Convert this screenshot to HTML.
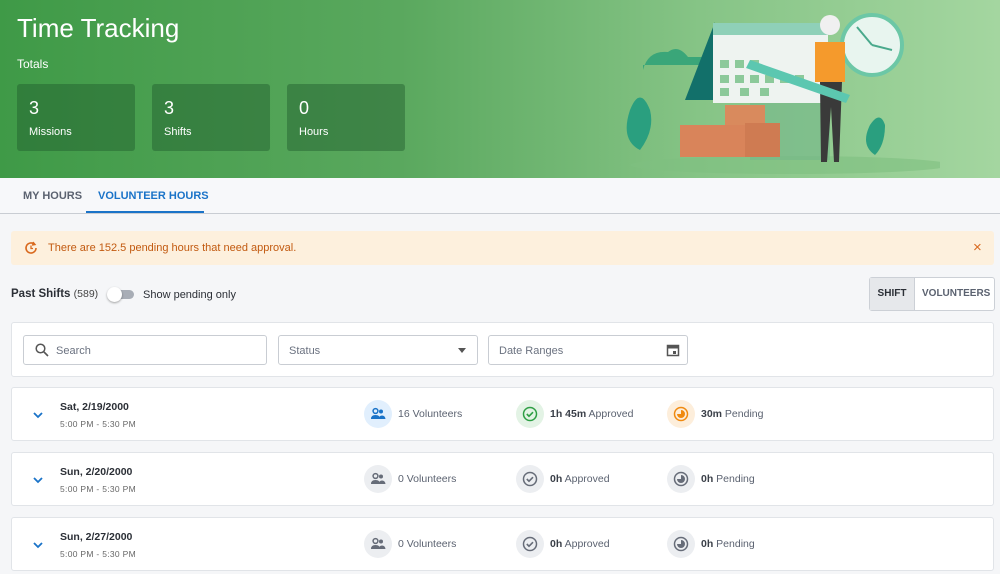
<!DOCTYPE html>
<html><head><meta charset="utf-8"><style>
*{box-sizing:border-box;margin:0;padding:0}
body{width:1000px;height:574px;overflow:hidden;background:#f5f6f8;font-family:"Liberation Sans",sans-serif;color:#2b2f36;position:relative}
.hdr{position:absolute;left:0;top:0;width:1000px;height:178px;background:linear-gradient(90deg,#3f9a47 0%,#5aa85e 40%,#86c486 70%,#a4d6a0 100%)}
.hdr h1{position:absolute;left:17px;top:13px;font-size:26px;font-weight:400;color:#fff}
.tot{position:absolute;left:17px;top:57px;font-size:12px;color:#fff}
.card{position:absolute;top:84px;width:118px;height:67px;background:rgba(30,90,45,.45);border-radius:3px;color:#fff}
.card b{position:absolute;left:12px;top:14px;font-size:18px;font-weight:400}
.card span{position:absolute;left:12px;top:42px;font-size:11px}
.tabs{position:absolute;top:178px;left:0;width:1000px;height:36px;background:#f7f8fa;border-bottom:1px solid #c9cdd3}
.tab{position:absolute;top:12px;font-size:11px;font-weight:700;color:#5b6270}
.tab.a{color:#1a73c8}
.ul{position:absolute;left:86px;top:33px;width:118px;height:2px;background:#1a73c8}
.alert{position:absolute;left:11px;top:231px;width:983px;height:34px;background:#fdf0dd;border-radius:3px}
.alert span{position:absolute;left:37px;top:11px;font-size:11px;color:#c25a10}
.ps{position:absolute;left:11px;top:288px;font-size:11.5px;font-weight:700}
.ps small{font-weight:400;font-size:10.5px;color:#444}
.tg{position:absolute;left:109px;top:290px;width:25px;height:9px;background:#a8adb6;border-radius:5px}
.tg i{position:absolute;left:-2px;top:-3px;width:15px;height:15px;border-radius:50%;background:#fff;box-shadow:0 1px 2px rgba(0,0,0,.35)}
.spo{position:absolute;left:143px;top:289px;font-size:11px}
.seg{position:absolute;left:869px;top:277px;width:126px;height:34px;border:1px solid #ccd0d6;border-radius:3px;background:#fff;font-size:10px;font-weight:700}
.seg .s1{position:absolute;left:0;top:0;width:45px;height:32px;background:#e6e8eb;border-right:1px solid #ccd0d6;text-align:center;line-height:32px}
.seg .s2{position:absolute;left:52px;top:0;line-height:32px;color:#5b6270}
.fil{position:absolute;left:11px;top:322px;width:983px;height:55px;background:#fff;border:1px solid #e1e4e8;border-radius:3px}
.in{position:absolute;top:12px;height:30px;border:1px solid #c9cdd3;border-radius:3px;font-size:11px;color:#6b7280;padding:9px 0 0 10px}
.row{position:absolute;left:11px;width:983px;height:54px;background:#fff;border:1px solid #e1e4e8;border-radius:3px}
.row .d{position:absolute;left:48px;top:13px;font-size:10.5px;font-weight:700}
.row .t{position:absolute;left:48px;top:31px;font-size:8.5px;color:#666;letter-spacing:.3px}
.row .ch{position:absolute;left:20px;top:23px}
.ic{position:absolute;top:12px;width:28px;height:28px;border-radius:50%;background:#eceef1}
.ic svg{position:absolute;left:6px;top:6px}
.lb{position:absolute;top:20px;font-size:10.5px;color:#5b6270}
.lb b{color:#3a3f48}
</style></head><body>
<div class="hdr">
<h1>Time Tracking</h1><div class="tot">Totals</div>
<div class="card" style="left:17px"><b>3</b><span>Missions</span></div>
<div class="card" style="left:152px"><b>3</b><span>Shifts</span></div>
<div class="card" style="left:287px"><b>0</b><span>Hours</span></div>
<svg style="position:absolute;left:600px;top:0" width="340" height="178">
<ellipse cx="190" cy="165" rx="160" ry="9" fill="#7fbf80" opacity=".6"/>
<path d="M43 70 q5-20 25-18 q10-8 20 5 h15 v8 h-60z" fill="#3aa679"/>
<rect x="150" y="100" width="80" height="60" fill="#74b88a" opacity=".6"/>
<path d="M85 100 l30-78 v78z" fill="#12706a"/>
<rect x="113" y="23" width="115" height="80" fill="#eef3f0"/>
<rect x="113" y="23" width="115" height="12" fill="#8fd0b8"/>
<g fill="#8cc99a"><rect x="120" y="60" width="9" height="8"/><rect x="135" y="60" width="9" height="8"/><rect x="150" y="60" width="9" height="8"/><rect x="120" y="75" width="9" height="8"/><rect x="135" y="75" width="9" height="8"/><rect x="150" y="75" width="9" height="8"/><rect x="165" y="75" width="9" height="8"/><rect x="180" y="75" width="9" height="8"/><rect x="195" y="75" width="9" height="8"/><rect x="120" y="88" width="9" height="8"/><rect x="140" y="88" width="9" height="8"/><rect x="160" y="88" width="9" height="8"/></g>
<rect x="125" y="105" width="40" height="20" fill="#d98a5d"/><rect x="80" y="125" width="65" height="32" fill="#d9845a"/><rect x="145" y="123" width="35" height="34" fill="#cf7b52"/>
<path d="M30 110 q10-25 20 0 q5 20-10 40 q-20-10-10-40z" fill="#2a9f7f"/>
<path d="M270 125 q10-15 15 0 q0 20-10 30 q-15-10-5-30z" fill="#2a9f7f"/>
<circle cx="272" cy="45" r="30" fill="#e8f5ef" stroke="#6cc7a6" stroke-width="4"/>
<path d="M272 45 l-15-18 M272 45 l20 5" stroke="#4aa98c" stroke-width="2"/>
<circle cx="230" cy="25" r="10" fill="#f0f0f0"/>
<rect x="215" y="42" width="30" height="40" fill="#f59a2c"/>
<path d="M220 82 h22 l-3 80 h-5 l-3-55 l-4 55 h-6z" fill="#3a3a3a"/>
<path d="M150 60 l100 35 l-4 8 l-100-35z" fill="#5cc7b0"/>
</svg>
</div>
<div class="tabs"><div class="tab" style="left:23px">MY HOURS</div><div class="tab a" style="left:98px">VOLUNTEER HOURS</div><div class="ul"></div></div>
<div class="alert"><svg style="position:absolute;left:13px;top:10px" width="14" height="14" viewBox="0 0 14 14"><path d="M12 7a5 5 0 1 1-2-4" fill="none" stroke="#d9691e" stroke-width="1.6"/><path d="M9 1l2 2.5-3 .5" fill="none" stroke="#d9691e" stroke-width="1.4"/><path d="M7 4.5V7.5h2" fill="none" stroke="#d9691e" stroke-width="1.3"/></svg><span>There are 152.5 pending hours that need approval.</span><span style="left:962px;top:8px;font-size:15px;color:#d9691e">×</span></div>
<div class="ps">Past Shifts <small>(589)</small></div>
<div class="tg"><i></i></div><div class="spo">Show pending only</div>
<div class="seg"><div class="s1">SHIFT</div><div class="s2">VOLUNTEERS</div></div>
<div class="fil">
<div class="in" style="left:11px;width:244px;padding-left:32px"><svg style="position:absolute;left:11px;top:7px" width="14" height="14"><circle cx="5.5" cy="5.5" r="4.3" fill="none" stroke="#555" stroke-width="1.5"/><path d="M9 9l4 4" stroke="#555" stroke-width="1.6"/></svg>Search</div>
<div class="in" style="left:266px;width:200px">Status<span style="position:absolute;right:11px;top:12px;border:4px solid transparent;border-top:5px solid #555"></span></div>
<div class="in" style="left:476px;width:200px">Date Ranges<svg style="position:absolute;right:7px;top:7px" width="14" height="14"><rect x="1.5" y="2.5" width="11" height="10" fill="none" stroke="#555" stroke-width="1.5"/><rect x="1.5" y="2.5" width="11" height="3" fill="#555"/><rect x="7" y="8" width="3" height="3" fill="#555"/></svg></div>
</div>
<div class="row" style="top:387px">
<svg class="ch" width="12" height="8"><path d="M2 2l4 4 4-4" fill="none" stroke="#1a73c8" stroke-width="1.8"/></svg>
<div class="d">Sat, 2/19/2000</div><div class="t">5:00 PM - 5:30 PM</div>
<div class="ic" style="left:352px;background:#e1effd"><svg width="16" height="16"><circle cx="5.5" cy="5" r="2.4" fill="none" stroke="#1a73c8" stroke-width="1.5"/><path d="M1 13q0-4 4.5-4t4.5 4z" fill="#1a73c8"/><circle cx="11" cy="5.5" r="2" fill="#1a73c8"/><path d="M9 13q0-3.5 3-3.5t3.5 3.5z" fill="#1a73c8"/></svg></div>
<div class="lb" style="left:386px">16 Volunteers</div>
<div class="ic" style="left:504px;background:#e3f3e5"><svg width="16" height="16"><circle cx="8" cy="8" r="6.5" fill="none" stroke="#2e9e44" stroke-width="1.5"/><path d="M4.8 8l2.2 2.2 4-4" fill="none" stroke="#2e9e44" stroke-width="1.6"/></svg></div>
<div class="lb" style="left:538px"><b>1h 45m</b> Approved</div>
<div class="ic" style="left:655px;background:#fdeedb"><svg width="16" height="16"><circle cx="8" cy="8" r="6.5" fill="none" stroke="#f08a10" stroke-width="1.5"/><path d="M8 4a4 4 0 1 1-4 4h4z" fill="#f08a10"/></svg></div>
<div class="lb" style="left:689px"><b>30m</b> Pending</div>
</div>
<div class="row" style="top:452px">
<svg class="ch" width="12" height="8"><path d="M2 2l4 4 4-4" fill="none" stroke="#1a73c8" stroke-width="1.8"/></svg>
<div class="d">Sun, 2/20/2000</div><div class="t">5:00 PM - 5:30 PM</div>
<div class="ic" style="left:352px"><svg width="16" height="16"><circle cx="5.5" cy="5" r="2.4" fill="none" stroke="#666c78" stroke-width="1.5"/><path d="M1 13q0-4 4.5-4t4.5 4z" fill="#666c78"/><circle cx="11" cy="5.5" r="2" fill="#666c78"/><path d="M9 13q0-3.5 3-3.5t3.5 3.5z" fill="#666c78"/></svg></div>
<div class="lb" style="left:386px">0 Volunteers</div>
<div class="ic" style="left:504px"><svg width="16" height="16"><circle cx="8" cy="8" r="6.5" fill="none" stroke="#666c78" stroke-width="1.5"/><path d="M4.8 8l2.2 2.2 4-4" fill="none" stroke="#666c78" stroke-width="1.6"/></svg></div>
<div class="lb" style="left:538px"><b>0h</b> Approved</div>
<div class="ic" style="left:655px"><svg width="16" height="16"><circle cx="8" cy="8" r="6.5" fill="none" stroke="#666c78" stroke-width="1.5"/><path d="M8 4a4 4 0 1 1-4 4h4z" fill="#666c78"/></svg></div>
<div class="lb" style="left:689px"><b>0h</b> Pending</div>
</div>
<div class="row" style="top:517px">
<svg class="ch" width="12" height="8"><path d="M2 2l4 4 4-4" fill="none" stroke="#1a73c8" stroke-width="1.8"/></svg>
<div class="d">Sun, 2/27/2000</div><div class="t">5:00 PM - 5:30 PM</div>
<div class="ic" style="left:352px"><svg width="16" height="16"><circle cx="5.5" cy="5" r="2.4" fill="none" stroke="#666c78" stroke-width="1.5"/><path d="M1 13q0-4 4.5-4t4.5 4z" fill="#666c78"/><circle cx="11" cy="5.5" r="2" fill="#666c78"/><path d="M9 13q0-3.5 3-3.5t3.5 3.5z" fill="#666c78"/></svg></div>
<div class="lb" style="left:386px">0 Volunteers</div>
<div class="ic" style="left:504px"><svg width="16" height="16"><circle cx="8" cy="8" r="6.5" fill="none" stroke="#666c78" stroke-width="1.5"/><path d="M4.8 8l2.2 2.2 4-4" fill="none" stroke="#666c78" stroke-width="1.6"/></svg></div>
<div class="lb" style="left:538px"><b>0h</b> Approved</div>
<div class="ic" style="left:655px"><svg width="16" height="16"><circle cx="8" cy="8" r="6.5" fill="none" stroke="#666c78" stroke-width="1.5"/><path d="M8 4a4 4 0 1 1-4 4h4z" fill="#666c78"/></svg></div>
<div class="lb" style="left:689px"><b>0h</b> Pending</div>
</div>
</body></html>
